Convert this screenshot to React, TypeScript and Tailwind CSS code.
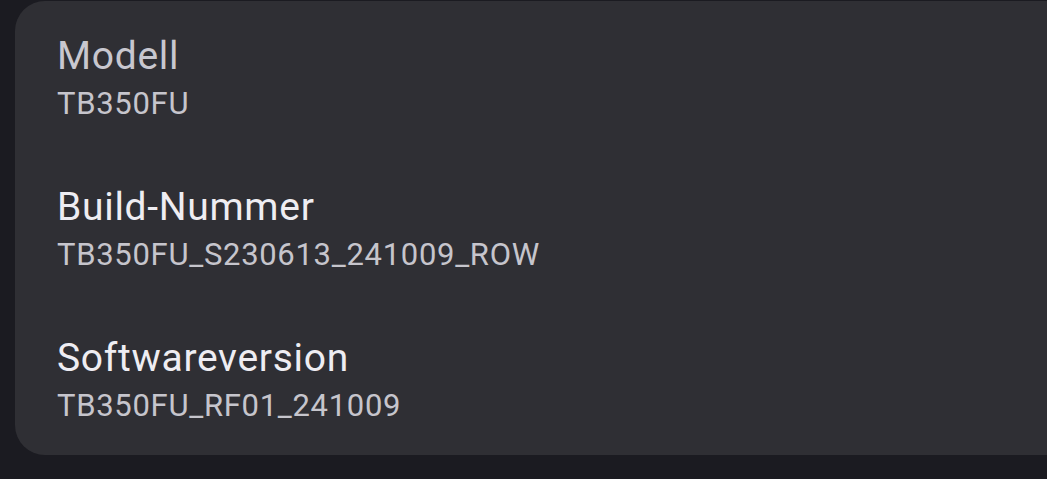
const rows = [
  { title: 'Modell', value: 'TB350FU', dim: true },
  { title: 'Build-Nummer', value: 'TB350FU_S230613_241009_ROW', dim: false },
  { title: 'Softwareversion', value: 'TB350FU_RF01_241009', dim: false },
];

export default function App() {
  return (
    <div className="h-[479px] w-[1047px] overflow-hidden bg-[#1b1b21] pt-px font-['Roboto',sans-serif]">
      <div className="ml-[15px] flex w-[1100px] flex-col gap-[62px] rounded-[30px] bg-[#2f2f34] pb-[31px] pl-[42px] pt-[32px]">
        {rows.map((row) => (
          <div key={row.title} className="flex flex-col gap-[7px]">
            <div className={`text-[39px] leading-[46px] tracking-[0.7px] ${row.dim ? 'text-[#c8c7cf]' : 'text-[#eeedf2]'}`}>{row.title}</div>
            <div className="text-[31px] leading-[36px] tracking-[0.7px] text-[#c6c5cc]">{row.value}</div>
          </div>
        ))}
      </div>
    </div>
  );
}
